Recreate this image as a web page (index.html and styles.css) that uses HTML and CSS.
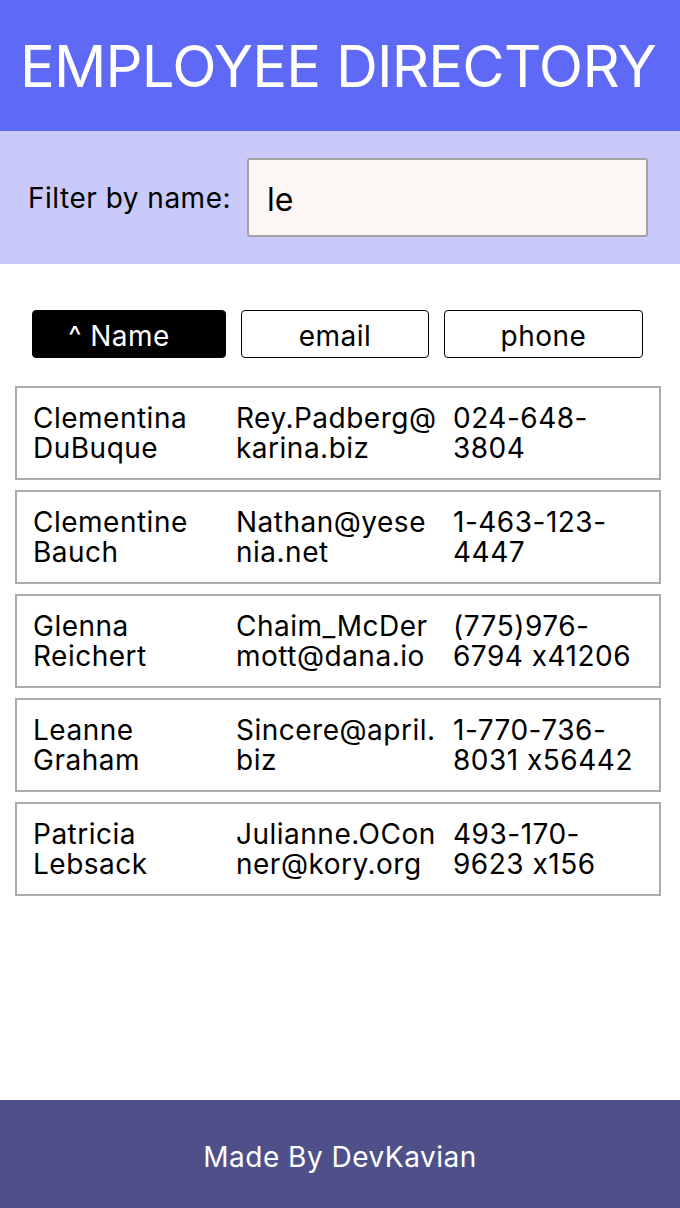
FILE: index.html
```html
<!DOCTYPE html>
<html lang="en">
<head>
<meta charset="utf-8">
<title>Employee Directory</title>
<link rel="stylesheet" href="styles.css">
</head>
<body>
<div class="page">
  <header class="header">
    <h1 class="title">EMPLOYEE DIRECTORY</h1>
  </header>
  <section class="filter">
    <label class="filter-label" for="q">Filter by name:</label>
    <div class="filter-input" id="q">le</div>
  </section>
  <main class="content">
    <div class="sort-bar">
      <button class="sort-btn active">^ Name</button>
      <button class="sort-btn">email</button>
      <button class="sort-btn">phone</button>
    </div>
    <div class="list">
      <div class="row"><div class="cell">Clementina DuBuque</div><div class="cell mail">Rey.Padberg@karina.biz</div><div class="cell">024-648-3804</div></div>
      <div class="row"><div class="cell">Clementine Bauch</div><div class="cell mail">Nathan@yesenia.net</div><div class="cell">1-463-123-4447</div></div>
      <div class="row"><div class="cell">Glenna Reichert</div><div class="cell mail">Chaim_McDermott@dana.io</div><div class="cell">(775)976-6794 x41206</div></div>
      <div class="row"><div class="cell">Leanne Graham</div><div class="cell mail">Sincere@april.biz</div><div class="cell">1-770-736-8031 x56442</div></div>
      <div class="row"><div class="cell">Patricia Lebsack</div><div class="cell mail">Julianne.OConner@kory.org</div><div class="cell">493-170-9623 x156</div></div>
    </div>
  </main>
  <footer class="footer">Made By DevKavian</footer>
</div>
</body>
</html>
```
FILE: styles.css
```css
* { box-sizing: border-box; }
html, body { margin: 0; padding: 0; }
body {
  font-family: Inter, Roboto, "Liberation Sans", sans-serif;
  font-feature-settings: "calt" 0;
  color: #000;
  background: #fff;
}
.page {
  min-height: 1208px;
  display: flex;
  flex-direction: column;
}
.header {
  background: #5e69f5;
  height: 131px;
  display: flex;
  align-items: center;
  justify-content: center;
  padding-right: 4px;
}
.title {
  margin: 0;
  color: #fff;
  font-weight: 400;
  font-size: 58px;
  letter-spacing: -0.8px;
}
.filter {
  background: #c9cafa;
  height: 133px;
  display: flex;
  align-items: center;
  padding: 0 32px 0 28px;
  gap: 16px;
}
.filter-label {
  font-size: 28px;
  letter-spacing: 0.5px;
}
.filter-input {
  flex: 1;
  height: 79px;
  background: #fcf6f5;
  border: 2px solid #a3a3a3;
  border-radius: 3px;
  font-size: 32px;
  padding: 3px 18px 0;
  display: flex;
  align-items: center;
}
.content {
  flex: 1;
  padding: 46px 19px 0 15px;
}
.sort-bar {
  display: flex;
  gap: 15px;
  padding: 0 17px;
}
.sort-btn {
  height: 48px;
  font-family: inherit;
  font-feature-settings: "calt" 0;
  font-size: 28px;
  letter-spacing: 0.5px;
  background: #fff;
  color: #000;
  border: 1.5px solid #000;
  border-radius: 4px;
  padding: 3px 0 0;
}
.sort-btn:nth-child(1) { width: 194px; }
.sort-btn:nth-child(2) { width: 188px; }
.sort-btn:nth-child(3) { width: 199px; }
.sort-btn.active {
  background: #000;
  color: #fff;
  padding-right: 20px;
}
.list {
  margin-top: 28px;
  display: flex;
  flex-direction: column;
  gap: 10px;
}
.row {
  border: 2px solid #ababab;
  height: 94px;
  display: grid;
  grid-template-columns: 203px 217px 1fr;
  padding: 0 14px 0 16px;
  align-items: center;
  font-size: 28px;
  letter-spacing: 0.5px;
  line-height: 30px;
}
.cell {
  overflow-wrap: anywhere;
  padding-right: 14px;
}
.cell:last-child {
  padding-right: 0;
}
.footer {
  background: #4e5189;
  color: #fff;
  height: 108px;
  display: flex;
  align-items: center;
  justify-content: center;
  font-size: 28px;
  letter-spacing: 0.5px;
  padding-top: 5px;
}
```
